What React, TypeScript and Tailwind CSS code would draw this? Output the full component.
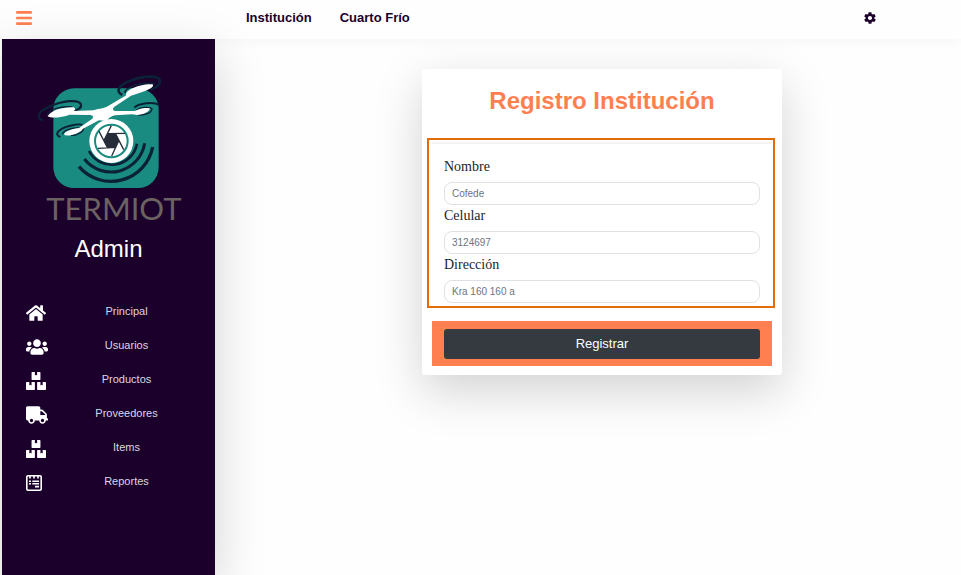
import React from "react";
import { FaBars, FaBoxes, FaHome, FaTruck, FaUsers } from "react-icons/fa";
import { IoMdSettings } from "react-icons/io";

function ReportIcon({ className }: { className?: string }) {
  return (
    <svg viewBox="0 0 16 16" className={className} fill="none" stroke="currentColor" aria-hidden="true">
      <rect x="0.8" y="0.8" width="14.4" height="14.4" rx="1.2" strokeWidth="1.6" />
      <path d="M4 1v2.4M8 1v2.4M12 1v2.4" strokeWidth="1.6" />
      <path d="M3 6.2h2M6.3 6.2H13M3 8.8h2M6.3 8.8H13M9 11.6h4" strokeWidth="1.6" />
    </svg>
  );
}

function DroneLogo() {
  return (
    <svg viewBox="45 35 378 360" className="h-[120px] w-[126px]" role="img" aria-label="Termiot dron">
      <rect x="97" y="84" width="316" height="299" rx="62" fill="#1a8b80" />
      <g fill="none" stroke="#0b2138" strokeWidth="8">
        <path d="M204 272A77 77 0 0 0 348 250" />
        <path d="M190 296A102 102 0 0 0 371 249" strokeWidth="9" />
        <path d="M174 319A127 127 0 0 0 395 260" strokeWidth="10" />
      </g>
      <g fill="none" stroke="#0b2138">
        <path d="M66 180C44 172 50 154 84 140C122 121 176 115 180 133C182 141 174 147 160 152" strokeWidth="7" />
        <path d="M78 166C80 148 120 136 154 140" strokeWidth="4" />
        <path d="M304 104C280 92 296 72 332 60C374 44 416 46 417 62C418 74 402 84 388 88" strokeWidth="8" />
        <path d="M312 98C310 82 352 66 402 70" strokeWidth="5" />
        <path d="M118 230C96 222 114 204 148 196C166 192 180 191 184 194" strokeWidth="6" />
        <path d="M124 222C130 206 160 200 188 204C186 216 166 226 150 226" strokeWidth="4" />
        <path d="M340 142C352 130 400 122 412 134" strokeWidth="6" />
        <path d="M346 150C358 140 388 138 393 146C392 158 372 165 352 164" strokeWidth="4" />
      </g>
      <g fill="#fff">
        <path d="M80 168C88 152 120 140 158 141C164 145 164 149 158 152L218 150C230 144 244 146 256 140L316 105C309 92 352 70 394 72C402 76 388 88 366 94L330 106L278 141C274 148 276 151 282 152L342 152C350 146 374 140 386 144C387 154 366 164 348 164L334 162L282 165C268 169 262 174 258 182L234 180L186 205C180 216 150 228 132 225C122 218 146 206 174 203L214 175C218 168 216 165 208 164L146 163C124 171 92 175 80 168Z" />
        <circle cx="271" cy="242" r="66" />
      </g>
      <circle cx="271" cy="242" r="49" fill="#fff" stroke="#1a8b80" strokeWidth="6" />
      <path d="M260 220L283 219L294 240L284 261L260 263L248 242Z" fill="#262c38" />
      <g stroke="#262c38" strokeWidth="4">
        <path d="M260 220L312 219M283 219L308 268M294 240L272 287M284 261L231 264M260 263L234 213M248 242L271 196" />
      </g>
    </svg>
  );
}

const menu = [
  { label: "Principal", icon: <FaHome className="size-[20px]" /> },
  { label: "Usuarios", icon: <FaUsers className="size-[22px]" /> },
  { label: "Productos", icon: <FaBoxes className="size-[20px]" /> },
  { label: "Proveedores", icon: <FaTruck className="size-[22px]" /> },
  { label: "Items", icon: <FaBoxes className="size-[20px]" /> },
  { label: "Reportes", icon: <ReportIcon className="size-[16px]" /> },
];

const fields = [
  { id: "nombre", label: "Nombre", placeholder: "Cofede" },
  { id: "celular", label: "Celular", placeholder: "3124697" },
  { id: "direccion", label: "Dirección", placeholder: "Kra 160 160 a" },
];

function Header() {
  return (
    <header className="flex h-[39px] items-center bg-[#fefefe] pr-[84px] pb-[3px] pl-[15px] text-[#1b002b] shadow-[0_4px_12px_rgba(0,0,0,0.03)]">
      <div className="w-[231px] shrink-0">
        <button type="button" aria-label="Menú" className="block text-[#ff7f50]">
          <FaBars className="size-[18px]" />
        </button>
      </div>
      <nav className="flex flex-1 gap-[28px] text-[13px] font-bold">
        <a href="#institucion">Institución</a>
        <a href="#cuarto-frio">Cuarto Frío</a>
      </nav>
      <button type="button" aria-label="Configuración">
        <IoMdSettings className="size-[14px]" />
      </button>
    </header>
  );
}

function Sidebar() {
  return (
    <aside className="ml-[2px] w-[213px] shrink-0 bg-[#1b002b] pt-[33px] text-white shadow-[0_16px_48px_rgba(0,0,0,0.175)]">
      <div className="mx-auto w-[146px]">
        <DroneLogo />
        <p className="text-right font-['Lato'] text-[31px] leading-[32px] text-[#6b6262]">TERMIOT</p>
      </div>
      <h2 className="mt-[10px] text-center text-[24px] leading-[30px]">Admin</h2>
      <ul className="mt-[36px] pr-[10px] pl-[24px]">
        {menu.map((item) => (
          <li key={item.label}>
            <a href={"#" + item.label.toLowerCase()} className="flex h-[34px] items-start">
              <span className="flex h-[26px] w-[22px] items-center">{item.icon}</span>
              <span className="flex-1 text-center text-[11px] leading-[22px] text-[#ddd6e2]">{item.label}</span>
            </a>
          </li>
        ))}
      </ul>
    </aside>
  );
}

function InstitutionForm() {
  return (
    <form
      onSubmit={(event) => event.preventDefault()}
      className="w-[360px] rounded-[3px] bg-white pb-[9px] shadow-[0_16px_48px_rgba(0,0,0,0.175)]"
    >
      <h1 className="pt-4 pb-[21px] text-center text-[24px] leading-[32px] font-bold text-[#ff7f50]">
        Registro Institución
      </h1>
      <div className="mr-[7px] ml-[5px] border-2 border-[#e36c0a] pt-[2px] pr-[1px] pb-[3px] pl-[3px]">
        <div className="border-t-2 border-[#f3f3f3] px-3 pt-3">
          {fields.map((field) => (
            <div key={field.id}>
              <label
                htmlFor={field.id}
                className="block h-[26px] font-['Liberation_Serif',serif] text-[14px] leading-[22px] text-[#212529]"
              >
                {field.label}
              </label>
              <input
                id={field.id}
                type="text"
                placeholder={field.placeholder}
                className="block h-[23px] w-full rounded-[8px] border border-[#dee2e6] bg-white px-[7px] text-[10px] placeholder:text-[#6c757d]"
              />
            </div>
          ))}
        </div>
      </div>
      <div className="mx-[10px] mt-[13px] bg-[#ff7f50] px-3 pt-2 pb-[7px]">
        <button type="submit" className="block h-[30px] w-full rounded-[3px] bg-[#343a40] text-[13px] text-white">
          Registrar
        </button>
      </div>
    </form>
  );
}

export default function App() {
  return (
    <div className="flex min-h-screen flex-col bg-[#fefefe] font-['Liberation_Sans',Arial,sans-serif]">
      <Header />
      <div className="flex flex-1">
        <Sidebar />
        <main className="flex flex-1 items-start justify-center pt-[30px] pl-7">
          <InstitutionForm />
        </main>
      </div>
    </div>
  );
}
